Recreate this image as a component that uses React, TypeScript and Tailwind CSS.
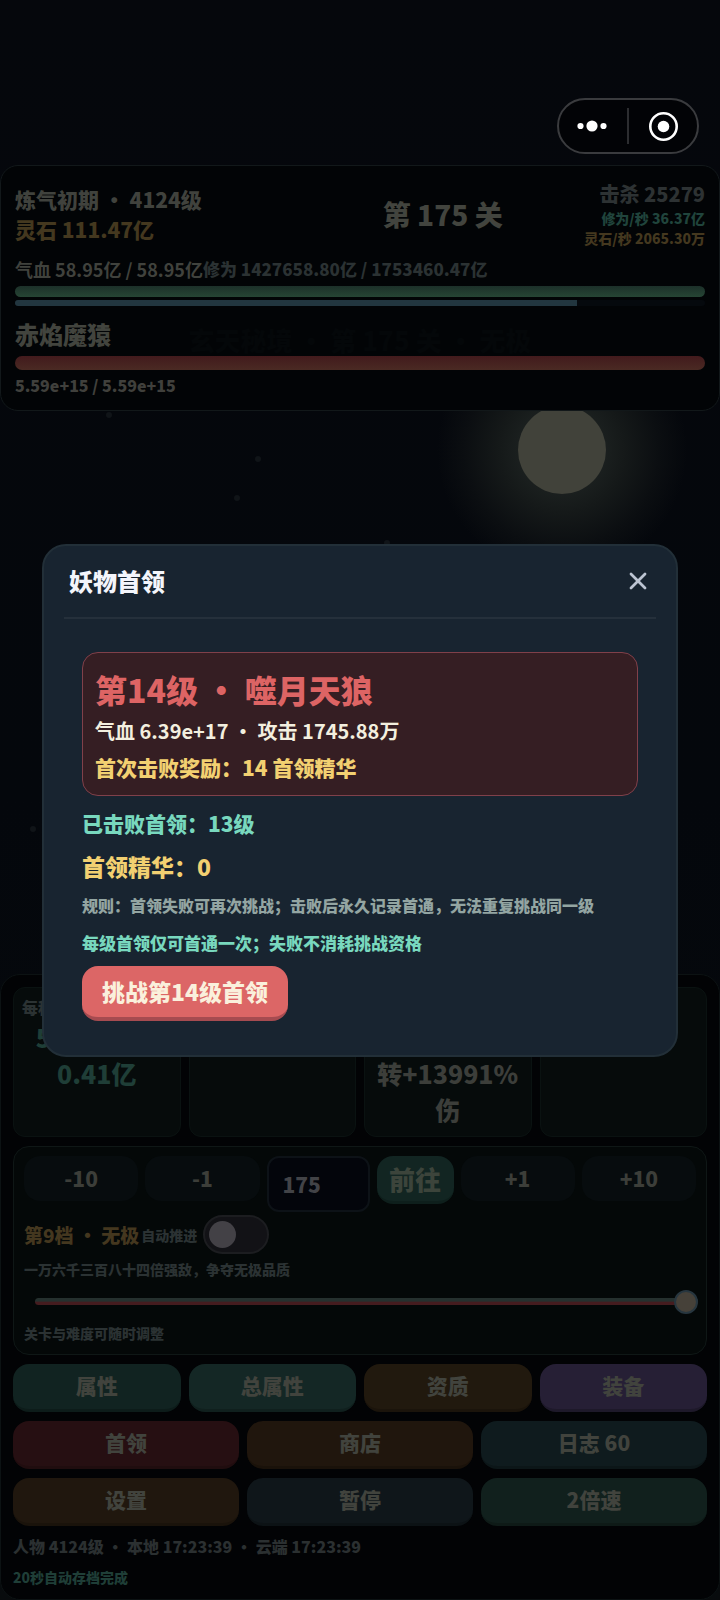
import { X } from "lucide-react";

const stars = [
  { left: "14.7%", top: 412 },
  { left: "35.4%", top: 456 },
  { left: "32.5%", top: 495 },
  { left: "53.3%", top: 540 },
  { left: "4.1%", top: 826 },
];

const stats = [
  { label: "每秒伤害", value: "58953131\n0.41亿", color: "text-[#1f3e37]" },
  { label: "", value: "", color: "text-[#3a3c38]" },
  { label: "", value: "\n转+13991%\n伤", color: "text-[#3c3e3a]" },
  { label: "", value: "", color: "text-[#3a3c38]" },
];

const topActions = [
  { label: "属性", color: "bg-[#112321] border-[#0d1c1a]" },
  { label: "总属性", color: "bg-[#142725] border-[#10201e]" },
  { label: "资质", color: "bg-[#21190e] border-[#1b140b]" },
  { label: "装备", color: "bg-[#261f35] border-[#1e192a]" },
];

const bottomActions = [
  { label: "首领", color: "bg-[#260f12] border-[#200d0f]" },
  { label: "商店", color: "bg-[#20160d] border-[#1a120a]" },
  { label: "日志 60", color: "bg-[#0f1b1e] border-[#0c1618]" },
  { label: "设置", color: "bg-[#20170e] border-[#1a130b]" },
  { label: "暂停", color: "bg-[#0f161a] border-[#0c1215]" },
  { label: "2倍速", color: "bg-[#11201d] border-[#0e1a17]" },
];

function Capsule() {
  return (
    <div className="mr-[21px] flex h-14 w-[142px] items-center self-end rounded-full border-2 border-[#3a3b3e] bg-[#020306]">
      <button aria-label="更多" className="flex h-full flex-1 items-center justify-center">
        <svg width="32" height="12" viewBox="0 0 32 12" fill="#fff">
          <circle cx="3.5" cy="6" r="3.1" />
          <circle cx="15" cy="6" r="5.6" />
          <circle cx="26.5" cy="6" r="3.1" />
        </svg>
      </button>
      <span className="h-9 w-0.5 bg-[#2c2d30]" />
      <button aria-label="关闭" className="flex h-full flex-1 items-center justify-center">
        <svg width="30" height="30" viewBox="0 0 30 30">
          <circle cx="15.5" cy="15.5" r="13.2" fill="none" stroke="#fff" strokeWidth="2.6" />
          <circle cx="15.5" cy="15.5" r="5.8" fill="#fff" />
        </svg>
      </button>
    </div>
  );
}

function Sky() {
  return (
    <div className="absolute inset-0 overflow-hidden">
      <div className="absolute top-[325px] left-[78%] size-[250px] -translate-x-1/2 rounded-full bg-[radial-gradient(closest-side,#1c2120_30%,#151919_50%,#0b0e11_78%,transparent)]" />
      <div className="absolute top-[406px] left-[78%] size-[88px] -translate-x-1/2 rounded-full bg-[#41423a]" />
      {stars.map((star) => (
        <span
          key={star.left}
          className="absolute size-1.5 rounded-full bg-[#101418]"
          style={{ left: star.left, top: star.top }}
        />
      ))}
    </div>
  );
}

function Hud() {
  return (
    <header className="relative mt-[11px] rounded-[18px] border border-[#12181a] bg-[#020406] px-3.5 pt-3.5 pb-3">
      <p className="absolute inset-x-0 top-[157px] text-center text-[26px] leading-[34px] text-[#040709]">
        玄天秘境 · 第 175 关 · 无极
      </p>
      <div className="flex items-center">
        <div className="w-2/5 text-[21px] leading-[30px]">
          <p className="text-[#40423d]">炼气初期 · 4124级</p>
          <p className="text-[#44381f]">灵石 111.47亿</p>
        </div>
        <p className="flex-1 pl-2.5 text-center text-[28px] leading-[38px] text-[#42443e]">第 175 关</p>
        <div className="text-right text-sm leading-5">
          <p className="text-xl leading-7 text-[#2d3233]">击杀 25279</p>
          <p className="text-[#20443c]">修为/秒 36.37亿</p>
          <p className="text-[#44381f]">灵石/秒 2065.30万</p>
        </div>
      </div>

      <div className="mt-2 flex leading-[26px]">
        <span className="text-lg leading-[26px] font-bold text-[#40423d]">气血 58.95亿 / 58.95亿</span>
        <span className="text-[17px] text-[#2b3233]">修为 1427658.80亿 / 1753460.47亿</span>
      </div>
      <div className="mt-1 h-[11px] rounded-full bg-linear-to-b from-[#1c3029] to-[#264534]" />
      <div className="mt-[3px] h-1.5 overflow-hidden rounded-full bg-[#05090d]">
        <div className="h-full bg-[#22363f]" style={{ width: "81.5%" }} />
      </div>

      <p className="relative mt-[11px] text-2xl leading-[34px] text-[#42443e]">赤焰魔猿</p>
      <div className="relative mt-[5px] h-3.5 rounded-full bg-linear-to-b from-[#421a1c] to-[#4a2a23]" />
      <p className="mt-0.5 text-base leading-[26px] text-[#40403c]">5.59e+15 / 5.59e+15</p>
    </header>
  );
}

function StepButton({ label }: { label: string }) {
  return (
    <button className="h-[45px] flex-1 rounded-2xl bg-[#070c0e] text-[21px] text-[#3c3e39]">{label}</button>
  );
}

function StageControls() {
  return (
    <section className="rounded-2xl border border-[#0f1716] bg-[#040808] px-2.5 py-[9px]">
      <div className="flex items-start gap-[7px]">
        <StepButton label="-10" />
        <StepButton label="-1" />
        <input
          aria-label="关卡"
          defaultValue="175"
          className="h-14 w-[103px] rounded-xl border-2 border-[#0d1217] bg-[#03050b] px-3.5 text-[21px] text-[#424347]"
        />
        <button className="h-12 w-[77px] rounded-2xl border-b-3 border-[#0e1f1c] bg-[#122522] text-[26px] leading-none text-[#3c443b]">
          前往
        </button>
        <StepButton label="+1" />
        <StepButton label="+10" />
      </div>

      <div className="mt-[3px] flex items-center">
        <span className="text-[19px] leading-7 text-[#44371f]">第9档 · 无极</span>
        <label htmlFor="auto" className="ml-0.5 text-sm text-[#2b3233]">
          自动推进
        </label>
        <input
          id="auto"
          type="checkbox"
          className="ml-1.5 flex h-[39px] w-[66px] appearance-none items-center rounded-full border-2 border-[#1c1d20] bg-[#121216] px-1 before:size-[27px] before:rounded-full before:bg-[#434146]"
        />
      </div>

      <p className="mt-1 text-sm leading-[22px] text-[#2b3233]">一万六千三百八十四倍强敌，争夺无极品质</p>
      <div className="mt-[9px] -mr-0.5 flex pl-[11px]">
        <input
          type="range"
          aria-label="难度"
          min={1}
          max={9}
          defaultValue={9}
          className="h-6 w-full appearance-none bg-transparent [&::-webkit-slider-runnable-track]:h-[7px] [&::-webkit-slider-runnable-track]:rounded-full [&::-webkit-slider-runnable-track]:bg-[linear-gradient(#25302e_45%,#451c1f_60%)] [&::-webkit-slider-thumb]:-mt-2 [&::-webkit-slider-thumb]:size-6 [&::-webkit-slider-thumb]:appearance-none [&::-webkit-slider-thumb]:rounded-full [&::-webkit-slider-thumb]:border-2 [&::-webkit-slider-thumb]:border-[#27363f] [&::-webkit-slider-thumb]:bg-[#464139]"
        />
      </div>
      <p className="mt-2 text-sm leading-6 text-[#2b3233]">关卡与难度可随时调整</p>
    </section>
  );
}

function ActionButton({ label, color }: { label: string; color: string }) {
  return (
    <button className={`h-12 rounded-2xl border-b-3 pb-0.5 text-[21px] leading-none text-[#41433d] ${color}`}>
      {label}
    </button>
  );
}

function BottomPanel() {
  return (
    <section className="relative flex flex-col gap-[9px] rounded-[20px] border border-[#0c1213] bg-[#020305] p-3">
      <div className="grid grid-cols-4 gap-2">
        {stats.map((stat, i) => (
          <div key={i} className="h-[150px] rounded-xl border border-[#0a1211] bg-[#060b0b] px-2 pt-[7px]">
            <p className="h-6 text-base leading-6 text-[#2b3233]">{stat.label}</p>
            <p className={`text-center text-[25px] leading-9 whitespace-pre-line ${stat.color}`}>{stat.value}</p>
          </div>
        ))}
      </div>

      <StageControls />

      <div className="grid grid-cols-4 gap-2">
        {topActions.map((action) => (
          <ActionButton key={action.label} {...action} />
        ))}
      </div>
      <div className="grid grid-cols-3 gap-x-2 gap-y-[9px]">
        {bottomActions.map((action) => (
          <ActionButton key={action.label} {...action} />
        ))}
      </div>

      <div>
        <p className="text-base leading-[22px] text-[#2b3031]">人物 4124级 · 本地 17:23:39 · 云端 17:23:39</p>
        <p className="mt-2.5 text-sm leading-5 text-[#1f3e37]">20秒自动存档完成</p>
      </div>
    </section>
  );
}

function BossDialog() {
  return (
    <div className="absolute inset-0 flex items-center justify-center px-[42px]">
      <div
        role="dialog"
        aria-labelledby="boss-title"
        className="w-full rounded-[24px] border-2 border-[#222f38] bg-[#182430] px-5 pb-[34px]"
      >
        <div className="flex h-[73px] items-center justify-between border-b-2 border-[#25303b] pr-1 pl-[5px]">
          <h2 id="boss-title" className="text-2xl text-[#f3f5fb]">
            妖物首领
          </h2>
          <button aria-label="关闭弹窗">
            <X className="size-7 text-[#bcc4d2]" strokeWidth={2.4} />
          </button>
        </div>

        <div className="px-[18px] pt-[33px]">
          <div className="rounded-2xl border border-[#80404a] bg-[#351e23] px-3 pt-3.5 pb-3">
            <h3 className="text-[32px] leading-[44px] text-[#dd6464]">第14级 · 噬月天狼</h3>
            <p className="mt-1 text-xl leading-8 font-bold text-[#f3efdf]">气血 6.39e+17 · 攻击 1745.88万</p>
            <p className="mt-1 text-[21px] leading-8 text-[#f2d071]">首次击败奖励：14 首领精华</p>
          </div>
          <p className="mt-[11px] text-[21px] leading-8 text-[#78d8be]">已击败首领：13级</p>
          <p className="mt-[11px] text-[23px] leading-8 text-[#f2d071]">首领精华：0</p>
          <p className="mt-3 text-base leading-[22px] text-[#93a5a2]">
            规则：首领失败可再次挑战；击败后永久记录首通，无法重复挑战同一级
          </p>
          <p className="mt-3.5 text-[17px] leading-[26px] text-[#78d8be]">
            每级首领仅可首通一次；失败不消耗挑战资格
          </p>
          <button className="mt-2.5 h-[55px] rounded-2xl border-b-4 border-[#a64b50] bg-[#dc6666] px-5 text-[23px] leading-none text-[#faf0dc]">
            挑战第14级首领
          </button>
        </div>
      </div>
    </div>
  );
}

export default function App() {
  return (
    <main className="relative flex min-h-screen flex-col justify-between bg-linear-to-b from-[#05070c] via-[#04070c] to-[#080b0d] font-['Noto_Sans_CJK_SC',sans-serif] font-black">
      <Sky />
      <div className="relative flex flex-col pt-[98px]">
        <Capsule />
        <Hud />
      </div>
      <BottomPanel />
      <BossDialog />
    </main>
  );
}
